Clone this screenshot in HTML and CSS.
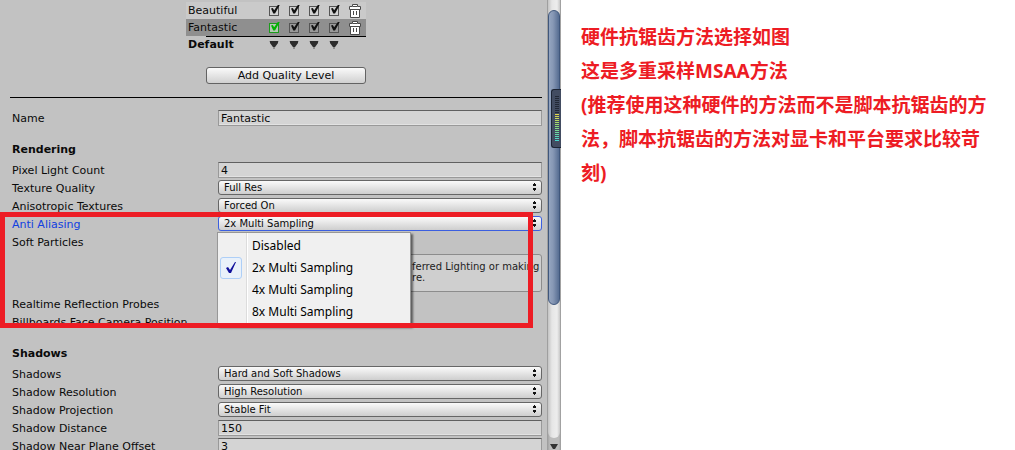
FILE: index.html
```
<!DOCTYPE html>
<html lang="zh-CN">
<head>
<meta charset="utf-8">
<meta name="viewport" content="width=device-width, initial-scale=1">
<title>Quality Settings</title>
<link rel="stylesheet" href="styles.css">
</head>
<body>
<svg class="defs" aria-hidden="true">
  <symbol id="trash" viewBox="0 0 14 14">
    <path d="M4.5 2.5v-2h5v2h3v3h-1v8h-9v-8h-1v-3z" fill="#fff" stroke="#4a4a4a"/>
    <path d="M2 5.5h10M5.5 7v4M8.5 7v4M5 2.5h4" stroke="#4a4a4a" fill="none"/>
  </symbol>
  <symbol id="down" viewBox="0 0 10 8">
    <path d="M0 0h10L6 6v2H4V6z" fill="#8e8e8e"/>
    <path d="M1 0h8v2L6 6H4L1 2z" fill="#2c2c2c"/>
  </symbol>
  <symbol id="updown" viewBox="0 0 5 8">
    <path d="M2 0h1v1h1v2H1V1h1zM1 5h3v2H3v1H2V7H1z" fill="#111"/>
  </symbol>
</svg>
<div class="page">
  <main class="inspector" lang="en">
    <div class="settings">
      <table class="levels">
        <tbody>
          <tr class="level">
            <th scope="row">Beautiful</th>
            <td><input type="checkbox" class="tick" aria-label="Beautiful, platform 1" checked></td>
            <td><input type="checkbox" class="tick" aria-label="Beautiful, platform 2" checked></td>
            <td><input type="checkbox" class="tick" aria-label="Beautiful, platform 3" checked></td>
            <td><input type="checkbox" class="tick" aria-label="Beautiful, platform 4" checked></td>
            <td><button class="plain" aria-label="Delete Beautiful"><svg class="trash"><use href="#trash"/></svg></button></td>
          </tr>
          <tr class="level selected">
            <th scope="row">Fantastic</th>
            <td><input type="checkbox" class="tick default" aria-label="Fantastic, platform 1" checked></td>
            <td><input type="checkbox" class="tick" aria-label="Fantastic, platform 2" checked></td>
            <td><input type="checkbox" class="tick" aria-label="Fantastic, platform 3" checked></td>
            <td><input type="checkbox" class="tick" aria-label="Fantastic, platform 4" checked></td>
            <td><button class="plain" aria-label="Delete Fantastic"><svg class="trash"><use href="#trash"/></svg></button></td>
          </tr>
          <tr class="defaults">
            <th scope="row">Default</th>
            <td><button class="plain" aria-label="Default for platform 1"><svg class="down"><use href="#down"/></svg></button></td>
            <td><button class="plain" aria-label="Default for platform 2"><svg class="down"><use href="#down"/></svg></button></td>
            <td><button class="plain" aria-label="Default for platform 3"><svg class="down"><use href="#down"/></svg></button></td>
            <td><button class="plain" aria-label="Default for platform 4"><svg class="down"><use href="#down"/></svg></button></td>
            <td></td>
          </tr>
        </tbody>
      </table>
      <button class="add">Add Quality Level</button>
      <hr class="rule">

      <div class="row"><label for="name">Name</label><input class="field" id="name" type="text" value="Fantastic"></div>

      <h2 class="heading">Rendering</h2>
      <div class="row"><label for="plc">Pixel Light Count</label><input class="field" id="plc" type="text" value="4"></div>
      <div class="row"><label for="tq">Texture Quality</label><div class="popup"><select id="tq"><option>Full Res</option></select><svg class="updown"><use href="#updown"/></svg></div></div>
      <div class="row"><label for="at">Anisotropic Textures</label><div class="popup"><select id="at"><option>Forced On</option></select><svg class="updown"><use href="#updown"/></svg></div></div>

      <div class="marked">
        <div class="row active"><label for="aa">Anti Aliasing</label>
          <div class="popup"><select id="aa"><option>2x Multi Sampling</option></select><svg class="updown"><use href="#updown"/></svg>
            <ul class="menu" role="listbox" aria-label="Anti Aliasing">
              <li role="option">Disabled</li>
              <li role="option" class="current" aria-selected="true"><span class="mark"><svg viewBox="0 0 10 12"><path d="M0 6l2-1 2 3 5-8h1L5 11H3z" fill="#10109c"/></svg></span>2x Multi Sampling</li>
              <li role="option">4x Multi Sampling</li>
              <li role="option">8x Multi Sampling</li>
            </ul>
          </div>
        </div>
        <div class="row"><label for="sp">Soft Particles</label><input class="tick" id="sp" type="checkbox" checked></div>
        <p class="help">ferred Lighting or making<br>re.</p>
        <div class="row"><label for="rr">Realtime Reflection Probes</label><input class="tick" id="rr" type="checkbox" checked></div>
        <div class="row"><label for="bf">Billboards Face Camera Position</label><input class="tick" id="bf" type="checkbox" checked></div>
      </div>

      <h2 class="heading">Shadows</h2>
      <div class="row"><label for="sh">Shadows</label><div class="popup"><select id="sh"><option>Hard and Soft Shadows</option></select><svg class="updown"><use href="#updown"/></svg></div></div>
      <div class="row"><label for="sr">Shadow Resolution</label><div class="popup"><select id="sr"><option>High Resolution</option></select><svg class="updown"><use href="#updown"/></svg></div></div>
      <div class="row"><label for="spr">Shadow Projection</label><div class="popup"><select id="spr"><option>Stable Fit</option></select><svg class="updown"><use href="#updown"/></svg></div></div>
      <div class="row"><label for="sd">Shadow Distance</label><input class="field" id="sd" type="text" value="150"></div>
      <div class="row"><label for="sn">Shadow Near Plane Offset</label><input class="field" id="sn" type="text" value="3"></div>
    </div>
    <div class="scroll">
      <div class="track"><div class="thumb"></div></div>
      <button class="plain step" aria-label="Scroll down"><svg viewBox="0 0 8 5"><path d="M0 0h8L5 5H3z" fill="#333"/></svg></button>
      <div class="meter"><div class="bars"></div></div>
    </div>
  </main>
  <aside class="notes">
    <p>硬件抗锯齿方法选择如图</p>
    <p>这是多重采样MSAA方法</p>
    <p>(推荐使用这种硬件的方法而不是脚本抗锯齿的方法，脚本抗锯齿的方法对显卡和平台要求比较苛刻)</p>
  </aside>
</div>
</body>
</html>
```
FILE: styles.css
```
* { box-sizing: border-box; }
body { margin: 0; background: #fff; }
.defs { display: none; }
.page {
  display: grid;
  grid-template-columns: minmax(0, 561fr) minmax(0, 454fr);
  height: 100vh;
  overflow: hidden;
}
.inspector {
  display: flex;
  overflow: hidden;
  background: #c2c2c2;
  color: #0a0a0a;
  font: 11px/18px "DejaVu Sans", Verdana, sans-serif;
}
.settings { flex: 1; min-width: 0; padding-top: 2px; }
.plain { display: block; margin: 0 auto; padding: 0; border: 0; background: none; }
.plain svg { display: block; }

/* quality level matrix */
.levels { width: 180px; margin-left: 186px; border-collapse: collapse; table-layout: fixed; }
.levels th { width: 78px; padding: 0 0 0 2px; text-align: left; font-weight: normal; }
.levels td { width: 20px; padding: 0; vertical-align: middle; }
.levels td:last-child { width: 22px; }
.levels tr { height: 17px; line-height: 17px; }
.level { background: #cacaca; }
.level.selected { background: #8f8f8f; }
.levels .defaults { height: 18px; line-height: 18px; background: linear-gradient(#000, #000) right top / 160px 1px no-repeat; }
.levels .defaults th { font-weight: bold; }
.levels .tick { margin: 0 auto; }
.trash { width: 14px; height: 14px; }
.down { width: 10px; height: 8px; }

.tick {
  appearance: none;
  position: relative;
  display: block;
  width: 10px;
  height: 10px;
  margin: 0;
  border: 1px solid #555;
  background: #d2d2d2;
  color: #111;
}
.selected .tick { background: #999; }
.selected .tick.default { border-color: #1b9c1b; color: #00b400; background: #b5c8b5; }
.tick::after {
  content: "";
  position: absolute;
  left: 1px;
  top: -2px;
  width: 9px;
  height: 9px;
  background: currentColor;
  clip-path: polygon(0 45%, 20% 40%, 35% 65%, 80% 0, 100% 0, 45% 100%, 25% 100%);
}

.add {
  display: block;
  width: 160px;
  height: 17px;
  margin: 13px 0 13px 206px;
  padding: 0;
  border: 1px solid #636363;
  border-radius: 3px;
  background: linear-gradient(#fafafa, #d0d0d0);
  color: #0a0a0a;
  font: inherit;
  line-height: 15px;
}
.rule { height: 1px; margin: 0 5px 11px 10px; border: 0; background: #000; }

/* property rows */
.row {
  display: grid;
  grid-template-columns: 206px minmax(0, 1fr);
  align-items: start;
  height: 18px;
  margin: 0 5px 0 12px;
  padding-top: 1px;
}
.row label { white-space: nowrap; }
.row .tick { margin-top: 3px; }
.active label { color: #1040e0; }
.heading { margin: 14px 12px 2px; font-size: 11px; line-height: 18px; }
.field {
  width: 100%;
  height: 16px;
  padding: 0 2px;
  border: 1px solid #999;
  border-top-color: #606060;
  border-radius: 0;
  background: #d4d4d4;
  box-shadow: inset 0 -1px #e2e2e2;
  color: #0a0a0a;
  font: inherit;
  line-height: 14px;
}
.popup { position: relative; }
.popup select {
  appearance: none;
  display: block;
  width: 100%;
  height: 15px;
  padding: 0 5px;
  border: 1px solid #666;
  border-radius: 3px;
  background: linear-gradient(#fafafa, #cecece);
  color: #0a0a0a;
  font: inherit;
  font-size: 10px;
  line-height: 13px;
}
.popup #aa { border-color: #3b5fe0; }
.updown { position: absolute; right: 5px; top: 3px; width: 5px; height: 8px; pointer-events: none; }

.help {
  height: 38px;
  margin: 3px 5px 3px 218px;
  padding: 6px 0 0 193px;
  border: 1px solid #8c8c8c;
  border-radius: 3px;
  background: #cfcfcf;
  color: #222;
  font-size: 10px;
  line-height: 11px;
  white-space: nowrap;
}

/* annotated block */
.marked { position: relative; }
.marked::after {
  content: "";
  position: absolute;
  z-index: 3;
  inset: -3px 14px 3px 0;
  border: 5px solid #ed1c24;
  pointer-events: none;
}
.menu {
  position: absolute;
  z-index: 2;
  left: -1px;
  top: 16px;
  width: 194px;
  margin: 0;
  padding: 2px;
  border: 1px solid #979797;
  list-style: none;
  background: linear-gradient(90deg, transparent 28px, #dcdcdc 28px, #dcdcdc 29px, #fff 29px, #fff 30px, transparent 30px) #f0f0f0;
  box-shadow: 2px 2px 2px #0008;
  color: #000;
  font: 12px/22px "Noto Sans", "Noto Sans CJK SC", sans-serif;
}
.menu li { position: relative; padding-left: 32px; }
.mark {
  position: absolute;
  left: 0;
  top: 0;
  display: grid;
  place-items: center;
  width: 22px;
  height: 22px;
  border: 1px solid #aecff7;
  border-radius: 3px;
  background: #e9f1fa;
}
.mark svg { width: 10px; height: 12px; }

/* scroll bar */
.scroll {
  position: relative;
  display: flex;
  flex-direction: column;
  width: 14px;
  background: linear-gradient(90deg, #999, #bcbcbc 3px, #bcbcbc 12px, #999);
}
.track {
  flex: 1;
  margin: 0 1px;
  padding-top: 10px;
  border-radius: 0 0 6px 6px;
  background: linear-gradient(90deg, #c4c4c4, #e6e6e6 4px, #ededed 9px, #c8c8c8);
}
.thumb {
  height: 69%;
  border: 1px solid #40577c;
  border-radius: 6px;
  background: linear-gradient(90deg, #94a5c0, #8798b5 40%, #566d92);
}
.step { display: grid; place-items: center; height: 12px; padding-top: 4px; }
.step svg { width: 8px; height: 5px; }
.meter {
  position: absolute;
  right: 0;
  top: 89px;
  width: 10px;
  height: 59px;
  padding: 6px 1px 0 3px;
  border: 1px solid #1c2433;
  border-right: 0;
  border-radius: 3px 0 0 3px;
  background: #424c61;
}
.bars {
  width: 4px;
  height: 45px;
  background:
    repeating-linear-gradient(transparent 0 1px, #424c61 1px 2px),
    linear-gradient(#222936 0 18px, #e6d648 18px, #8edc78 30px, #45d6d0);
}

.notes {
  padding: 20px 24px 0 20px;
  color: #ed1c24;
  font: bold 19px/34px "Noto Sans", "Noto Sans CJK SC", sans-serif;
}
.notes p { margin: 0; }
```
